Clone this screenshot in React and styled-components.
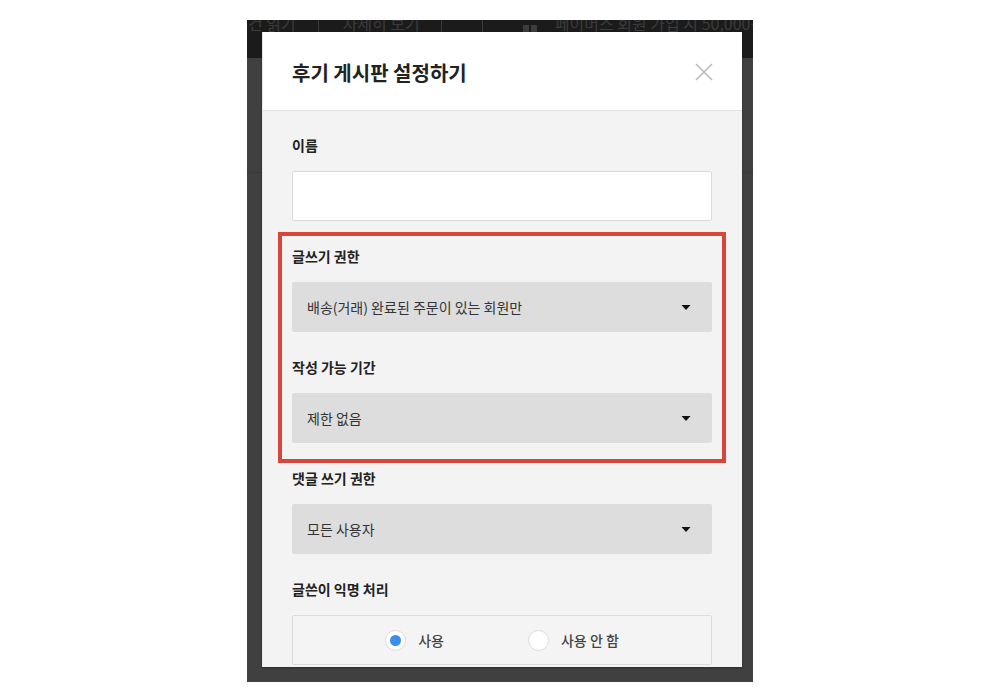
import React from "react";
import styled, { createGlobalStyle } from "styled-components";

const GlobalStyle = createGlobalStyle`
  html, body {
    margin: 0;
    padding: 0;
    background: #ffffff;
  }
  body {
    font-family: "Noto Sans CJK KR", "Noto Sans", sans-serif;
  }
  * {
    box-sizing: border-box;
  }
`;

const Page = styled.div`
  width: 1000px;
  height: 697px;
  display: flex;
  justify-content: center;
  padding-top: 20px;
`;

const Backdrop = styled.div`
  position: relative;
  width: 506px;
  height: 662px;
  overflow: hidden;
  background-color: #404040;
  background-image: linear-gradient(
    to bottom,
    transparent 152px,
    #383838 152px,
    #383838 153px,
    transparent 153px
  );
`;

const TopBar = styled.div`
  height: 38px;
  background: #1b1b1b;
  display: flex;
  align-items: flex-start;
  white-space: nowrap;
  overflow: hidden;
`;

const GhostItem = styled.span`
  margin-top: -9px;
  margin-left: ${({ $ml }) => $ml}px;
  font-size: 16px;
  line-height: 24px;
  color: #3c3c3c;
`;

const GhostSep = styled.span`
  margin-top: -4px;
  margin-left: ${({ $ml }) => $ml}px;
  width: 1px;
  height: 18px;
  background: #3c3c3c;
  flex-shrink: 0;
`;

const GhostBlocks = styled.span`
  margin-left: ${({ $ml }) => $ml}px;
  margin-top: 5px;
  display: flex;
  gap: 2px;
  span {
    width: 6px;
    height: 8px;
    background: #3c3c3c;
  }
`;

const Modal = styled.div`
  position: absolute;
  left: 15px;
  top: 12px;
  width: 480px;
  height: 635px;
  background: #f3f3f3;
  border-left: 1px solid #e6e6e6;
  box-shadow: 0 1px 2px rgba(0, 0, 0, 0.35);
  display: flex;
  flex-direction: column;
  overflow: hidden;
`;

const Header = styled.div`
  height: 79px;
  flex-shrink: 0;
  background: #ffffff;
  border-bottom: 1px solid #e2e2e2;
  display: flex;
  align-items: center;
  justify-content: space-between;
  padding: 2px 28px 0 29px;
`;

const Title = styled.h1`
  margin: 0;
  font-size: 20px;
  font-weight: 700;
  color: #222222;
`;

const CloseButton = styled.button`
  width: 20px;
  height: 20px;
  padding: 0;
  border: none;
  background: none;
  display: flex;
  align-items: center;
  justify-content: center;
  cursor: pointer;
`;

const Body = styled.div`
  flex: 1;
  overflow: hidden;
  padding: 24px 30px 0 29px;
`;

const Field = styled.div`
  margin-top: ${({ $mt }) => $mt ?? 25}px;
`;

const Label = styled.div`
  font-size: 14px;
  line-height: 21px;
  font-weight: 700;
  color: #222222;
  margin-bottom: 15px;
`;

const TextInput = styled.input`
  display: block;
  width: 100%;
  height: 50px;
  border: 1px solid #dcdcdc;
  border-radius: 2px;
  background: #ffffff;
  outline: none;
  padding: 0 15px;
  font-family: inherit;
  font-size: 14px;
`;

const Highlight = styled.div`
  margin: 11px -14px 0;
  padding: 10px 10px 16px;
  border: 4px solid #d8463b;
`;

const SelectBox = styled.div`
  height: 50px;
  border-radius: 2px;
  background: #dddddd;
  display: flex;
  align-items: center;
  justify-content: space-between;
  padding: 0 21px 0 15px;
  font-size: 14px;
  color: #333333;
`;

const RadioBox = styled.div`
  height: 50px;
  border: 1px solid #dcdcdc;
  border-radius: 2px;
  background: #f4f4f4;
  display: flex;
  align-items: center;
  justify-content: center;
  gap: 84px;
`;

const RadioOption = styled.label`
  display: flex;
  align-items: center;
  gap: 12px;
  font-size: 14px;
  font-weight: 500;
  color: #444444;
`;

const RadioCircle = styled.span`
  width: 21px;
  height: 21px;
  border-radius: 50%;
  background: #ffffff;
  border: 1px solid #dddddd;
  display: flex;
  align-items: center;
  justify-content: center;
  &::after {
    content: "";
    width: 11px;
    height: 11px;
    border-radius: 50%;
    background: ${({ $checked }) => ($checked ? "#3b8eea" : "transparent")};
  }
`;

const Caret = () => (
  <svg width="10" height="5" viewBox="0 0 10 5">
    <path d="M0.5 0 L9.5 0 L5 5 Z" fill="#111" />
  </svg>
);

const Select = ({ value }) => (
  <SelectBox>
    <span>{value}</span>
    <Caret />
  </SelectBox>
);

const App = () => {
  return (
    <>
      <GlobalStyle />
      <Page>
        <Backdrop>
          <TopBar>
            <GhostItem $ml={-8}>5건 읽기</GhostItem>
            <GhostSep $ml={22} />
            <GhostItem $ml={24}>자세히 보기</GhostItem>
            <GhostSep $ml={21} />
            <GhostSep $ml={40} />
            <GhostBlocks $ml={40}>
              <span />
              <span />
            </GhostBlocks>
            <GhostItem $ml={18}>페이머스 회원 가입 시 50,000원</GhostItem>
          </TopBar>
          <Modal>
            <Header>
              <Title>후기 게시판 설정하기</Title>
              <CloseButton aria-label="닫기">
                <svg width="18" height="18" viewBox="0 0 18 18">
                  <path
                    d="M1 1 L17 17 M17 1 L1 17"
                    stroke="#b9b9b9"
                    strokeWidth="1.6"
                    fill="none"
                  />
                </svg>
              </CloseButton>
            </Header>
            <Body>
              <Field $mt={0}>
                <Label>이름</Label>
                <TextInput type="text" />
              </Field>
              <Highlight>
                <Field $mt={0}>
                  <Label>글쓰기 권한</Label>
                  <Select value="배송(거래) 완료된 주문이 있는 회원만" />
                </Field>
                <Field>
                  <Label>작성 가능 기간</Label>
                  <Select value="제한 없음" />
                </Field>
              </Highlight>
              <Field $mt={5}>
                <Label>댓글 쓰기 권한</Label>
                <Select value="모든 사용자" />
              </Field>
              <Field>
                <Label>글쓴이 익명 처리</Label>
                <RadioBox>
                  <RadioOption>
                    <RadioCircle $checked />
                    사용
                  </RadioOption>
                  <RadioOption>
                    <RadioCircle />
                    사용 안 함
                  </RadioOption>
                </RadioBox>
              </Field>
            </Body>
          </Modal>
        </Backdrop>
      </Page>
    </>
  );
};

export default App;
